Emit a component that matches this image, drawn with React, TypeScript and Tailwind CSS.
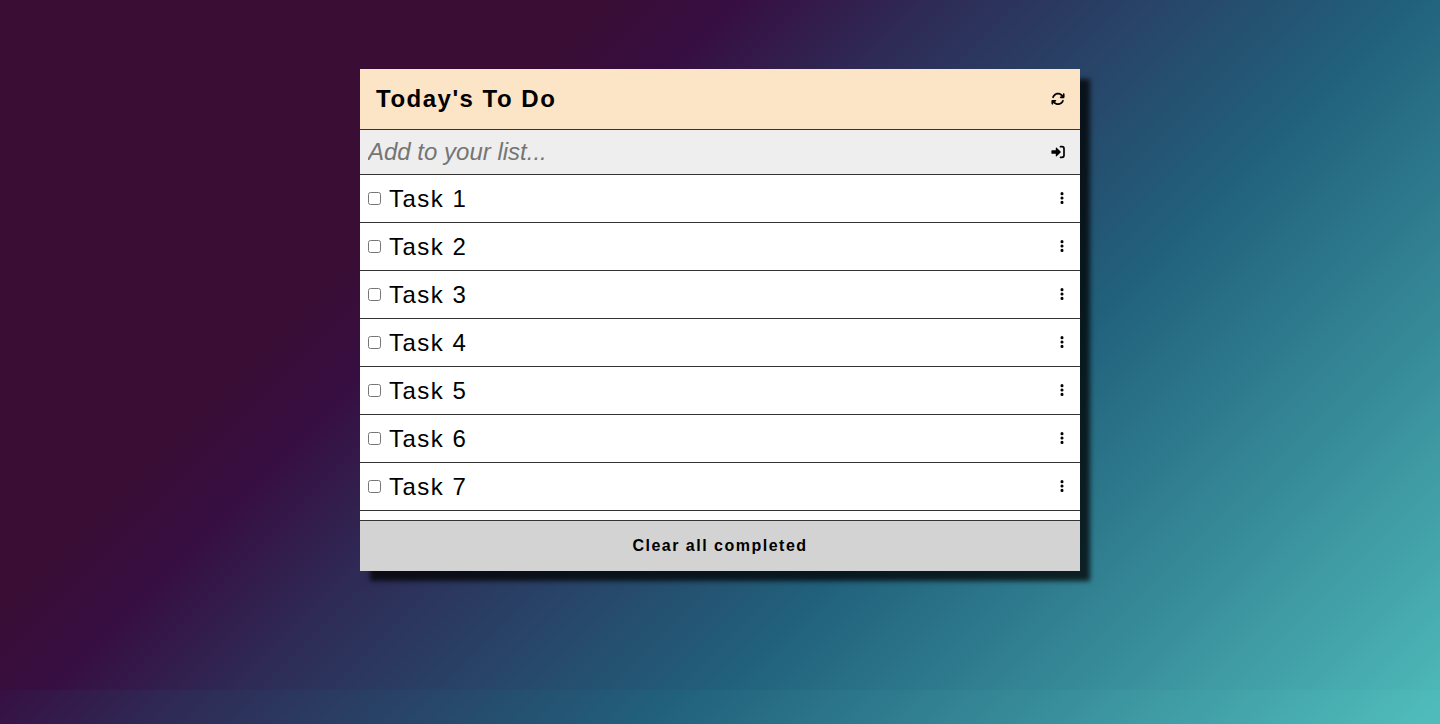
import React from "react";
import { FaArrowsRotate, FaEllipsisVertical } from "react-icons/fa6";

const tasks = ["Task 1", "Task 2", "Task 3", "Task 4", "Task 5", "Task 6", "Task 7"];

function EnterIcon() {
  return (
    <svg viewBox="0 0 14 14" className="size-[14px]" fill="none" stroke="currentColor">
      <path d="M9.5 1.7H11a2 2 0 0 1 2 2v6.6a2 2 0 0 1-2 2H9.5" strokeWidth="1.7" strokeLinecap="round" />
      <path d="M1 5.2h3.8V3.1c0-.5.5-.7.9-.4l3.9 3.9c.2.2.2.6 0 .8l-3.9 3.9c-.4.3-.9.1-.9-.4V8.8H1a.6.6 0 0 1-.6-.6V5.8c0-.3.3-.6.6-.6Z" fill="currentColor" stroke="none" />
    </svg>
  );
}

export default function App() {
  return (
    <div className="flex h-[724px] flex-col justify-between overflow-hidden bg-[linear-gradient(135deg,#390d34_0%,#390d34_28%,#370e42_34%,#2e2c57_43.5%,#21607b_65%,#4fbbba_100%)] pt-[69px] font-['Liberation_Sans',Arial,sans-serif] text-black">
      <main className="mx-auto flex h-[502px] w-[720px] shrink-0 flex-col bg-white shadow-[10px_10px_5px_rgba(0,0,0,0.75)]">
        <header className="flex h-[60px] shrink-0 items-center justify-between bg-[#fce4c6] pr-[15.5px] pl-4">
          <h1 className="text-[24px] font-bold tracking-[1.5px]">Today's To Do</h1>
          <button aria-label="Refresh"><FaArrowsRotate className="size-[14px]" /></button>
        </header>
        <form className="flex h-[46px] shrink-0 items-center justify-between border-y border-[#333] bg-[#eee] pr-[15.5px] pl-2">
          <input className="w-[500px] bg-transparent text-[24px] italic outline-none placeholder:text-[#757575]" placeholder="Add to your list..." />
          <button type="button" aria-label="Add"><EnterIcon /></button>
        </form>
        <ul className="min-h-0 grow overflow-hidden">
          {tasks.map((t) => (
            <li key={t} className="flex h-12 items-center border-b border-[#333] pr-[11px] pl-2">
              <input type="checkbox" className="mr-2 size-[13px]" />
              <span className="grow text-[24px] tracking-[1.5px]">{t}</span>
              <button className="pb-px" aria-label="Options"><FaEllipsisVertical className="size-[14px]" /></button>
            </li>
          ))}
        </ul>
        <button className="h-[51px] shrink-0 border-t border-[#333] bg-[#d3d3d3] text-[16px] font-bold tracking-[1.5px]">Clear all completed</button>
      </main>
      <div className="h-[34px] shrink-0 bg-[linear-gradient(135deg,#390d34_-95px,#370e42_-8px,#2e2c57_145px,#21607b_478px,#4fbbba_1025px)]" />
    </div>
  );
}
